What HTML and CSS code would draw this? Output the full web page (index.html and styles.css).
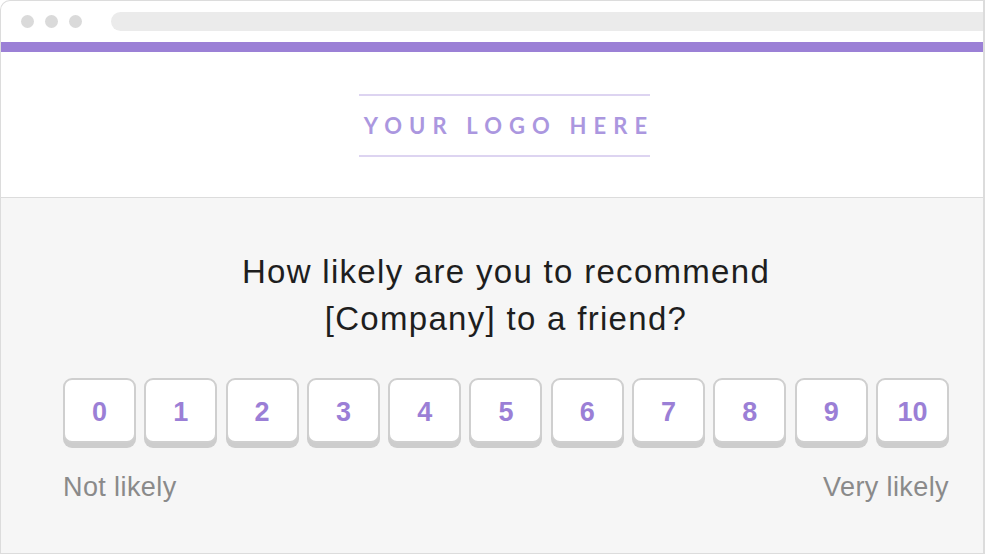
FILE: index.html
```html
<!DOCTYPE html>
<html lang="en">
<head>
<meta charset="utf-8">
<title>NPS survey</title>
<link rel="stylesheet" href="styles.css">
</head>
<body>
<div class="window">
  <div class="titlebar">
    <div class="dots"><span class="dot"></span><span class="dot"></span><span class="dot"></span></div>
    <div class="address"></div>
  </div>
  <div class="accent"></div>
  <div class="logo-area">
    <div class="logo">YOUR LOGO HERE</div>
  </div>
  <div class="survey">
    <h1 class="question">How likely are you to recommend<br>[Company] to a friend?</h1>
    <div class="scale">
      <button class="score">0</button>
      <button class="score">1</button>
      <button class="score">2</button>
      <button class="score">3</button>
      <button class="score">4</button>
      <button class="score">5</button>
      <button class="score">6</button>
      <button class="score">7</button>
      <button class="score">8</button>
      <button class="score">9</button>
      <button class="score">10</button>
    </div>
    <div class="labels">
      <span>Not likely</span>
      <span>Very likely</span>
    </div>
  </div>
</div>
</body>
</html>
```
FILE: styles.css
```css
* { box-sizing: border-box; }
html, body { margin: 0; padding: 0; background: #fff; }
body { font-family: "Liberation Sans", Arial, sans-serif; }

.window {
  width: 985px;
  height: 554px;
  border: 1px solid #dcdcdc;
  border-right-width: 2px;
  border-top-left-radius: 10px;
  overflow: hidden;
  display: flex;
  flex-direction: column;
  background: #fff;
}

.titlebar {
  height: 41px;
  display: flex;
  align-items: center;
  padding-left: 20px;
  flex-shrink: 0;
}
.dots { display: flex; gap: 11px; }
.dot {
  width: 13px; height: 13px; border-radius: 50%;
  background: #dadada;
}
.address {
  margin-left: 29px;
  flex: 1;
  height: 19px;
  background: #ebebeb;
  border-radius: 10px 0 0 10px;
}

.accent { height: 10px; background: #9b80d6; flex-shrink: 0; }

.logo-area {
  height: 145px;
  flex-shrink: 0;
  padding: 42px 0 0 358px;
}
.logo {
  width: 291px;
  height: 63px;
  border-top: 2px solid #ddd4f1;
  border-bottom: 2px solid #ddd4f1;
  display: flex;
  align-items: center;
  justify-content: center;
  white-space: nowrap;
  font-family: Lato, "Liberation Sans", sans-serif;
  font-weight: 700;
  font-size: 22px;
  letter-spacing: 7.1px;
  padding-left: 9px;
  color: #ab97df;
}

.survey {
  flex: 1;
  background: #f6f6f6;
  border-top: 1px solid #dcdcdc;
  padding: 50px 0 0 62px;
}
.question {
  margin: 0;
  width: 886px;
  text-align: center;
  font-weight: 400;
  font-size: 33px;
  letter-spacing: 1.3px;
  line-height: 47px;
  color: #1e1e1e;
}
.scale {
  margin-top: 36px;
  width: 886px;
  display: flex;
  justify-content: space-between;
}
.score {
  width: 73px;
  height: 65px;
  border: 2px solid #cfcfcf;
  border-radius: 9px;
  background: #fff;
  box-shadow: 0 5px 0 #cdcdcd;
  font-family: "Liberation Sans", Arial, sans-serif;
  font-weight: 700;
  font-size: 27px;
  color: #9b7fd6;
  padding: 3px 0 0;
  display: flex;
  align-items: center;
  justify-content: center;
}
.labels {
  margin-top: 29px;
  width: 886px;
  display: flex;
  justify-content: space-between;
  font-size: 27px;
  letter-spacing: 0.4px;
  color: #8a8a8a;
}
```
